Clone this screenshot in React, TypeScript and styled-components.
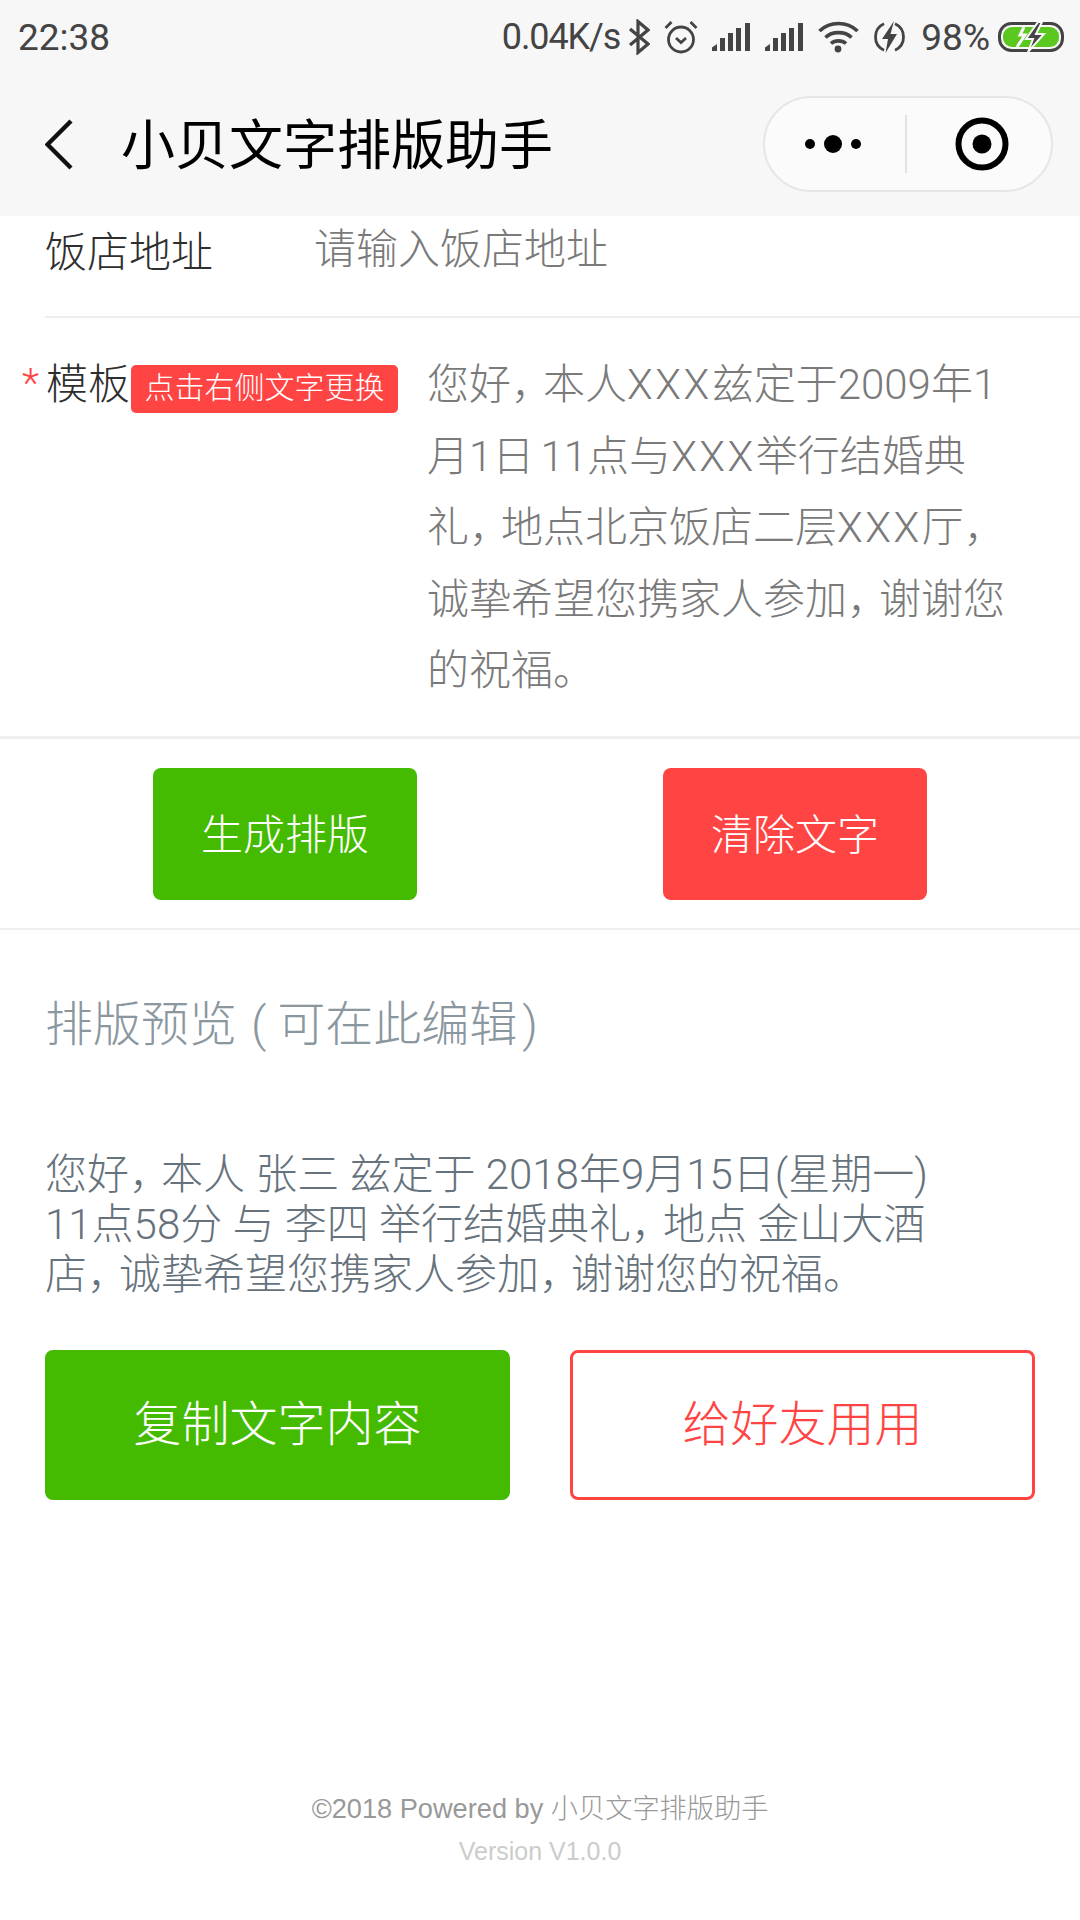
import React from "react";
import styled, { createGlobalStyle } from "styled-components";

const GlobalStyle = createGlobalStyle`
  html, body {
    margin: 0;
    padding: 0;
    background: #ffffff;
  }
  body {
    font-family: Roboto, "Noto Sans CJK SC", sans-serif;
    font-weight: 300;
  }
  * {
    box-sizing: border-box;
  }
`;

const templateLines = [
  "您好，本人XXX兹定于2009年1",
  "月1日 11点与XXX举行结婚典",
  "礼，地点北京饭店二层XXX厅，",
  "诚挚希望您携家人参加，谢谢您",
  "的祝福。",
];

const previewLines = [
  "您好，本人 张三 兹定于 2018年9月15日(星期一)",
  "11点58分 与 李四 举行结婚典礼，地点 金山大酒",
  "店，诚挚希望您携家人参加，谢谢您的祝福。",
];

// the phone font sets the full-width comma narrower and the X wider than ours
const renderLine = (line: string) =>
  line.split(/(，|XXX)/).map((part, i) => {
    if (part === "，") return <Comma key={i}>{part}</Comma>;
    if (part === "XXX") return <Wide key={i}>{part}</Wide>;
    return <React.Fragment key={i}>{part}</React.Fragment>;
  });

const BluetoothIcon = () => (
  <svg width="22" height="36" viewBox="0 0 22 36" fill="none" stroke="#444" strokeWidth="3.2">
    <path d="M2 10 L20 25 L10 33.5 V2.5 L20 11 L2 26" />
  </svg>
);

const AlarmIcon = () => (
  <svg width="34" height="34" viewBox="0 0 34 34" fill="none" stroke="#444" strokeWidth="2.8">
    <circle cx="17" cy="19.5" r="12.5" />
    <path d="M1.5 8 L7.5 2 M32.5 8 L26.5 2" />
    <path d="M12 18 L17 22.5 L22 18" />
  </svg>
);

const SignalIcon = () => (
  <svg width="39" height="28" viewBox="0 0 39 28" fill="#444">
    <path d="M0 28 V24.5 L5 21 V28 Z" />
    <rect x="8" y="15" width="5" height="13" />
    <rect x="16" y="10" width="5" height="18" />
    <rect x="24" y="5" width="5" height="23" />
    <rect x="33" y="0" width="5" height="28" />
  </svg>
);

const WifiIcon = () => (
  <svg width="41" height="32" viewBox="0 0 41 32" fill="none" stroke="#444" strokeWidth="3.6">
    <path d="M1.5 10 C12 0 29 0 39.5 10" />
    <path d="M7.5 16.5 C14 10 27 10 33.5 16.5" />
    <path d="M13 22.5 C17 19 24 19 28 22.5" />
    <circle cx="20" cy="28" r="3.4" fill="#444" stroke="none" />
  </svg>
);

const ChargeIcon = () => (
  <svg width="33" height="34" viewBox="0 0 33 34" fill="none">
    <path d="M11 3.8 A14.5 14.5 0 0 0 11 30.2 M22 3.8 A14.5 14.5 0 0 1 22 30.2" stroke="#444" strokeWidth="2.8" />
    <path d="M21 1 L9 19 H15 L12.5 33 L24 14 H17.5 Z" fill="#444" />
  </svg>
);

const BatteryIcon = () => (
  <svg width="66" height="30" viewBox="0 0 66 30" fill="none">
    <rect x="1.5" y="1.5" width="63" height="27" rx="12" stroke="#444" strokeWidth="3" />
    <rect x="5" y="5" width="56" height="20" rx="9" fill="#5ac81e" />
    <path d="M19 25 L27 13 H22 L26 5" stroke="#f7f7f7" strokeWidth="3" />
    <path d="M40 0 L28 17 H35 L30 30 L46 12 H38 L44 0 Z" fill="#444" stroke="#f7f7f7" strokeWidth="2" />
  </svg>
);

const BackIcon = () => (
  <svg width="28" height="52" viewBox="0 0 28 52" fill="none" stroke="#111" strokeWidth="4.4">
    <path d="M26 2 L2.5 25.5 L26 49" />
  </svg>
);

const MoreIcon = () => (
  <svg width="58" height="20" viewBox="0 0 58 20" fill="#000">
    <circle cx="5" cy="10" r="5" />
    <circle cx="28" cy="10" r="9" />
    <circle cx="51" cy="10" r="5" />
  </svg>
);

const TargetIcon = () => (
  <svg width="54" height="54" viewBox="0 0 54 54" fill="none">
    <circle cx="27" cy="27" r="23.5" stroke="#000" strokeWidth="6" />
    <circle cx="27" cy="27" r="9.5" fill="#000" />
  </svg>
);

const App = () => {
  return (
    <Page>
      <GlobalStyle />
      <Header>
        <StatusBar>
          <Clock>22:38</Clock>
          <StatusRight>
            <NetSpeed>0.04K/s</NetSpeed>
            <BluetoothIcon />
            <AlarmIcon />
            <SignalIcon />
            <SignalIcon />
            <WifiIcon />
            <ChargeIcon />
            <BatteryText>98%</BatteryText>
            <BatteryIcon />
          </StatusRight>
        </StatusBar>
        <NavBar>
          <BackIcon />
          <NavTitle>小贝文字排版助手</NavTitle>
          <Capsule>
            <CapsuleSide>
              <MoreIcon />
            </CapsuleSide>
            <CapsuleDivider />
            <CapsuleSide>
              <TargetIcon />
            </CapsuleSide>
          </Capsule>
        </NavBar>
      </Header>

      <AddressRow>
        <AddressLabel>饭店地址</AddressLabel>
        <Placeholder>请输入饭店地址</Placeholder>
      </AddressRow>

      <TemplateRow>
        <Star>*</Star>
        <TemplateLabel>模板</TemplateLabel>
        <Badge>点击右侧文字更换</Badge>
        <TemplateText>
          {templateLines.map((line) => (
            <div key={line}>{renderLine(line)}</div>
          ))}
        </TemplateText>
      </TemplateRow>

      <ActionRow>
        <SmallButton $color="#44bb00">生成排版</SmallButton>
        <SmallButton $color="#ff4444">清除文字</SmallButton>
      </ActionRow>

      <Preview>
        <PreviewTitle>
          排版预览<OpenParen>(</OpenParen>可在此编辑<CloseParen>)</CloseParen>
        </PreviewTitle>
        <PreviewText>
          {previewLines.map((line) => (
            <div key={line}>{renderLine(line)}</div>
          ))}
        </PreviewText>
        <BigButtons>
          <BigButton>复制文字内容</BigButton>
          <BigButton $outline>给好友用用</BigButton>
        </BigButtons>
      </Preview>

      <Footer>
        <Copyright>©2018 Powered by 小贝文字排版助手</Copyright>
        <Version>Version V1.0.0</Version>
      </Footer>
    </Page>
  );
};

export default App;

/* Styled Components */
const Page = styled.div`
  width: 1080px;
  height: 1920px;
  overflow: hidden;
  background: #ffffff;
`;

const Header = styled.div`
  height: 216px;
  background: #f7f7f7;
`;

const StatusBar = styled.div`
  height: 74px;
  padding: 0 16px 0 18px;
  display: flex;
  align-items: center;
  justify-content: space-between;
  color: #444444;
  font-size: 36px;
  font-weight: 400;
`;

const Clock = styled.div`
  font-size: 37px;
`;

const StatusRight = styled.div`
  display: flex;
  align-items: center;
  gap: 14px;
`;

const NetSpeed = styled.div`
  margin-right: -6px;
  letter-spacing: -1.1px;
`;

const BatteryText = styled.div`
  margin-left: 1px;
  margin-right: -6px;
  font-size: 37px;
`;

const NavBar = styled.div`
  height: 142px;
  padding: 0 28px 0 45px;
  display: flex;
  align-items: center;
`;

const NavTitle = styled.div`
  margin-left: 48px;
  margin-bottom: 8px;
  font-size: 54px;
  font-weight: 400;
  color: #000000;
  flex: 1;
`;

const Capsule = styled.div`
  width: 290px;
  height: 96px;
  margin-top: -2px;
  margin-right: -1px;
  display: flex;
  align-items: center;
  background: #fbfbfb;
  border: 2px solid #e6e6e6;
  border-radius: 48px;
`;

const CapsuleSide = styled.div`
  flex: 1;
  display: flex;
  align-items: center;
  justify-content: center;

  &:last-child {
    padding-left: 6px;
  }
`;

const CapsuleDivider = styled.div`
  width: 2px;
  height: 58px;
  margin-left: 1px;
  background: #e2e2e2;
`;

const AddressRow = styled.div`
  height: 102px;
  margin-left: 45px;
  display: flex;
  align-items: flex-start;
  border-bottom: 2px solid #eeeeee;
  font-size: 42px;
`;

const AddressLabel = styled.div`
  width: 271px;
  margin-top: 9px;
  line-height: 56px;
  color: #2e2e2e;
`;

const Placeholder = styled.div`
  margin-top: 6px;
  margin-left: -2px;
  line-height: 56px;
  color: #7a7a7a;
`;

const TemplateRow = styled.div`
  display: flex;
  align-items: flex-start;
  padding: 30px 0 30px 22px;
  border-bottom: 3px solid #eeeeee;
`;

const Star = styled.div`
  width: 24px;
  font-size: 40px;
  line-height: 72px;
  color: #ff4444;
`;

const TemplateLabel = styled.div`
  width: 85px;
  margin-top: 1px;
  font-size: 42px;
  line-height: 72px;
  color: #2e2e2e;
`;

const Badge = styled.div`
  width: 267px;
  height: 48px;
  margin-top: 17px;
  border-radius: 5px;
  background: #ff4444;
  color: #ffffff;
  font-size: 30px;
  line-height: 46px;
  text-align: center;
`;

const TemplateText = styled.div`
  margin-left: 29px;
  margin-top: 1px;
  margin-bottom: -1px;
  font-size: 42px;
  line-height: 71.6px;
  word-spacing: -4px;
  color: #7a7a7a;
  white-space: nowrap;
`;

const Comma = styled.span`
  letter-spacing: -10px;
`;

const Wide = styled.span`
  letter-spacing: 2.5px;
`;

const ActionRow = styled.div`
  display: flex;
  justify-content: space-between;
  padding: 29px 153px 28px 153px;
  border-bottom: 2px solid #eeeeee;
`;

const SmallButton = styled.div<{ $color: string }>`
  width: 264px;
  height: 132px;
  padding-bottom: 5px;
  display: flex;
  align-items: center;
  justify-content: center;
  border-radius: 8px;
  background: ${({ $color }) => $color};
  color: #ffffff;
  font-size: 42px;
`;

const Preview = styled.div`
  padding: 65px 45px 0;
`;

const PreviewTitle = styled.div`
  font-size: 48px;
  line-height: 60px;
  color: #8a979f;
`;

const OpenParen = styled.span`
  margin-left: 14px;
  margin-right: 11px;
`;

const CloseParen = styled.span`
  margin-left: 5px;
`;

const PreviewText = styled.div`
  margin-top: 95px;
  font-size: 42px;
  line-height: 50px;
  color: #66727c;
  white-space: nowrap;
`;

const BigButtons = styled.div`
  display: flex;
  justify-content: space-between;
  margin-top: 50px;
`;

const BigButton = styled.div<{ $outline?: boolean }>`
  width: 465px;
  height: 150px;
  padding-bottom: 10px;
  display: flex;
  align-items: center;
  justify-content: center;
  border-radius: 8px;
  border: 3px solid ${({ $outline }) => ($outline ? "#ff4444" : "#44bb00")};
  background: ${({ $outline }) => ($outline ? "#ffffff" : "#44bb00")};
  color: ${({ $outline }) => ($outline ? "#ff4444" : "#ffffff")};
  font-size: 48px;
`;

const Footer = styled.div`
  margin-top: 288px;
  text-align: center;
  font-family: "Liberation Sans", "Noto Sans CJK SC", sans-serif;
  line-height: 42px;
`;

const Copyright = styled.div`
  font-size: 27.2px;
  color: #999999;
`;

const Version = styled.div`
  font-size: 25px;
  color: #cccccc;
`;
